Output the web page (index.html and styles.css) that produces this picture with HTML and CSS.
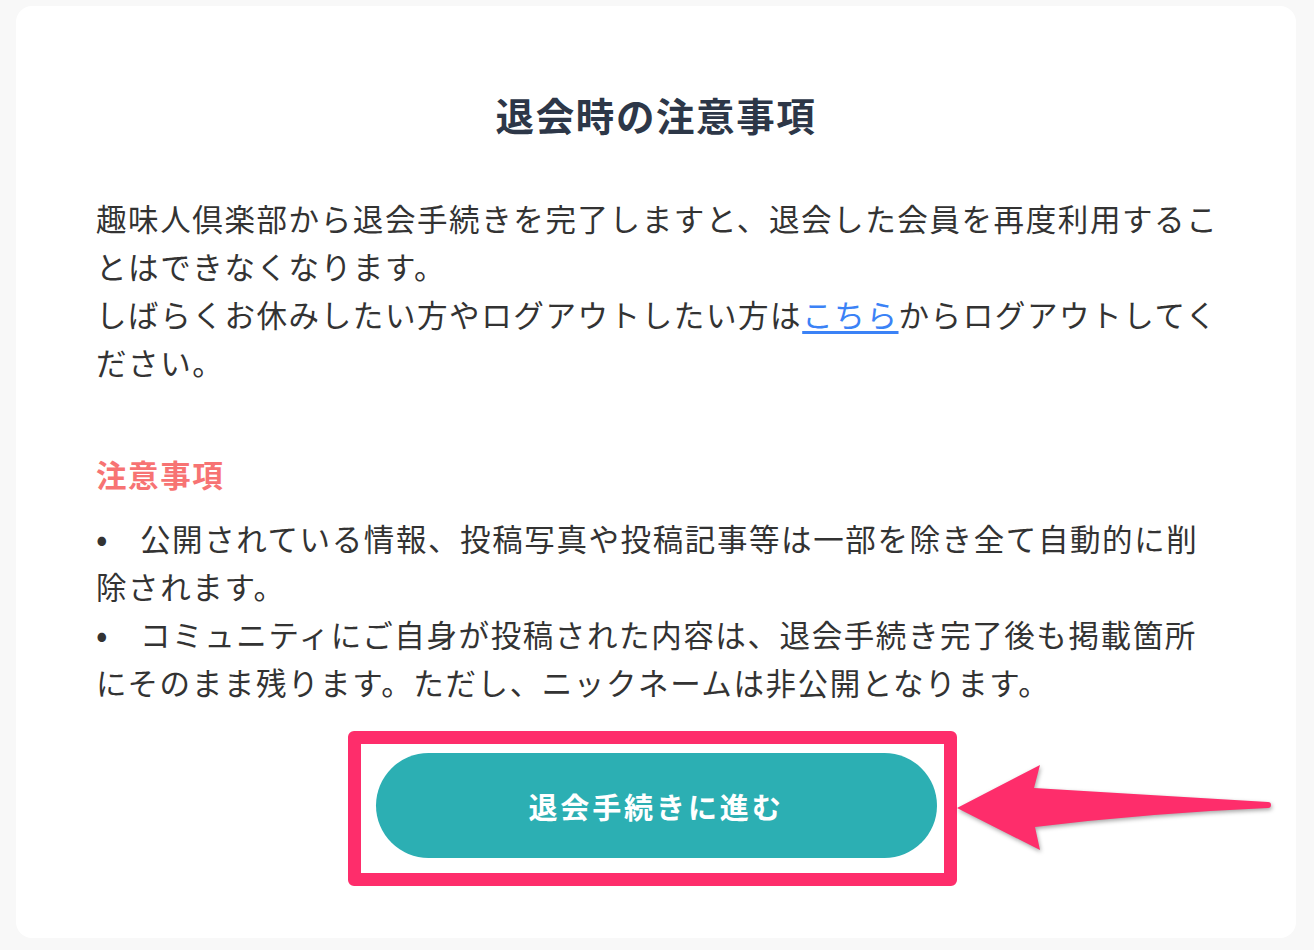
FILE: index.html
```html
<!DOCTYPE html>
<html lang="ja">
<head>
    <meta charset="UTF-8">
    <meta name="viewport" content="width=device-width, initial-scale=1.0">
    <title>退会時の注意事項</title>
    <link rel="stylesheet" href="styles.css">
</head>
<body>
    <div class="card">
        <h1 class="title">退会時の注意事項</h1>

        <p class="lead">趣味人倶楽部から退会手続きを完了しますと、退会した会員を再度利用することはできなくなります。<br>しばらくお休みしたい方やログアウトしたい方は<a href="#" class="link">こちら</a>からログアウトしてください。</p>

        <h2 class="notice-title">注意事項</h2>
        <ul class="notice-list">
            <li><span class="dot">•</span>公開されている情報、投稿写真や投稿記事等は一部を除き全て自動的に削除されます。</li>
            <li><span class="dot">•</span>コミュニティにご自身が投稿された内容は、退会手続き完了後も掲載箇所にそのまま残ります。ただし、ニックネームは非公開となります。</li>
        </ul>

        <div class="action">
            <button class="withdraw">退会手続きに進む</button>

            <!-- annotation: highlight frame + arrow -->
            <div class="mark-frame"></div>
            <svg class="mark-arrow" width="330" height="105" viewBox="0 0 330 105">
                <path d="M7 53 L90 10 L84 33 Q200 40 318 47 A3 3 0 0 1 318 53 Q200 58 85 72 L90 95 Z" fill="#fe2d6b"/>
            </svg>
        </div>
    </div>
</body>
</html>
```

FILE: styles.css
```css
* {
    margin: 0;
    padding: 0;
    box-sizing: border-box;
}

body {
    font-family: "Noto Sans CJK JP", "Noto Sans", sans-serif;
    background: #f8f8f8;
    color: #333;
    padding: 6px 18px 0 16px;
}

.card {
    background: #fff;
    border-radius: 16px;
    padding: 80px 76px 80px 80px;
    height: 932px;
    letter-spacing: 0.1em;
}

.title {
    text-align: center;
    font-size: 38.5px;
    font-weight: 700;
    line-height: 57px;
    color: #2d3748;
    margin-bottom: 51px;
    padding-right: 4px;
}

.lead {
    font-size: 30.5px;
    line-height: 48px;
}

.link {
    color: #3b82f6;
    text-decoration: underline;
    text-underline-offset: 4px;
}

.notice-title {
    margin-top: 64px;
    font-size: 30.5px;
    font-weight: 700;
    line-height: 48px;
    color: #f77373;
}

.notice-list {
    list-style: none;
    margin-top: 16px;
    font-size: 30.5px;
    line-height: 48px;
}

.dot {
    display: inline-block;
    width: 44px;
    letter-spacing: 0;
    font-size: 34px;
    line-height: 1;
}

.action {
    position: relative;
    display: flex;
    justify-content: center;
    padding-top: 47px;
    padding-right: 4px;
}

.withdraw {
    width: 561px;
    height: 105px;
    border: none;
    border-radius: 53px;
    background: #2cafb3;
    color: #fff;
    font-family: inherit;
    font-size: 29px;
    font-weight: 700;
    letter-spacing: 0.1em;
    cursor: pointer;
}

.mark-frame {
    position: absolute;
    left: 252px;
    top: 25px;
    width: 609px;
    height: 155px;
    border: 13px solid #fe2d6b;
    border-radius: 6px;
}

.mark-arrow {
    position: absolute;
    left: 854px;
    top: 49px;
    overflow: visible;
    filter: drop-shadow(1px 2px 2px rgba(0, 0, 0, 0.35));
}
```
